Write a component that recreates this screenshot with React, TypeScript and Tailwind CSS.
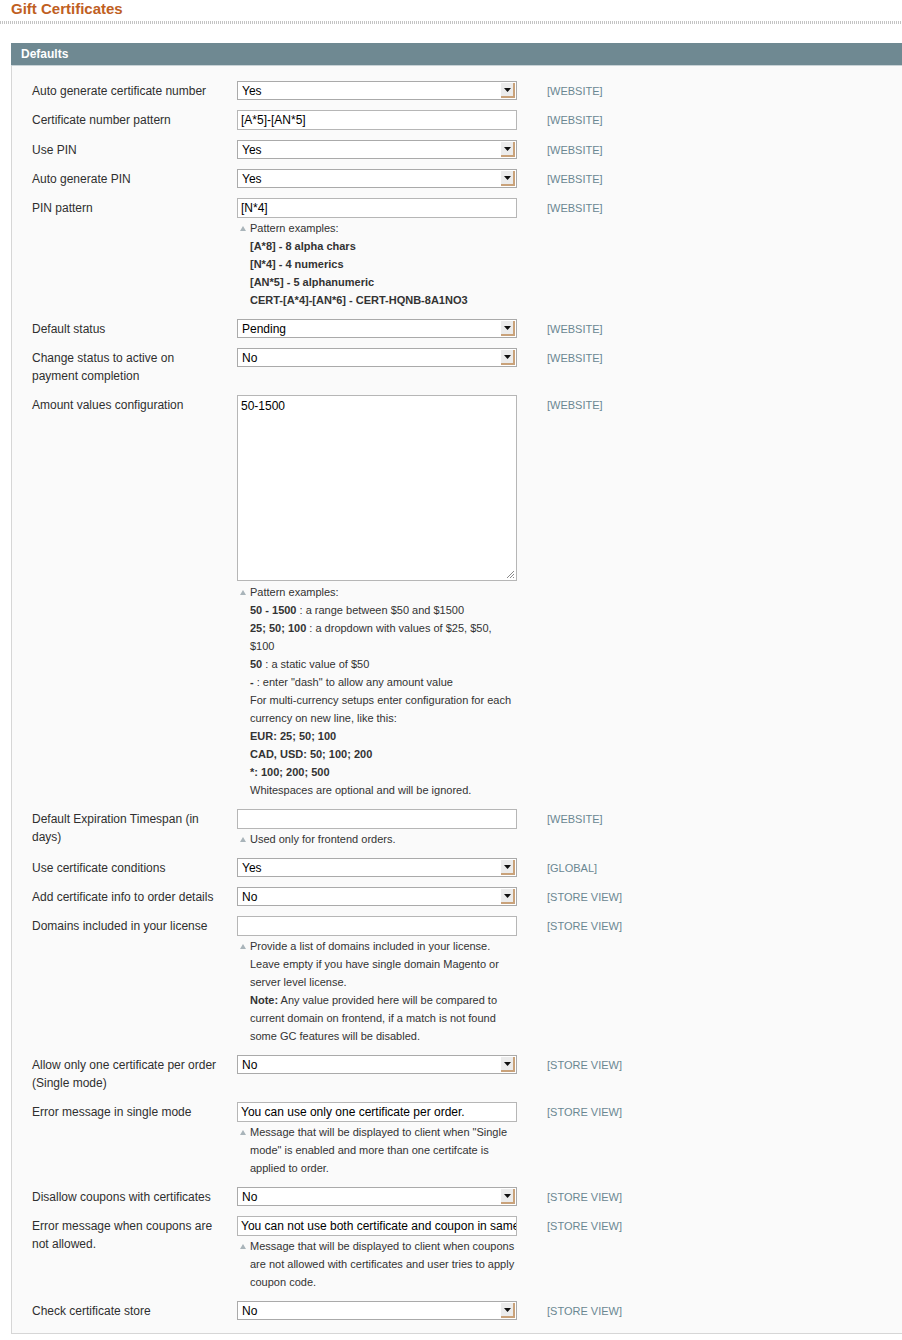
import React from "react";

type Kind = "select" | "text" | "textarea";

interface Row {
  label: string[];
  kind: Kind;
  value: string;
  scope: string;
  note?: React.ReactNode[];
}

const B = ({ children }: { children: React.ReactNode }) => (
  <span className="font-bold">{children}</span>
);

const rows: Row[] = [
  { label: ["Auto generate certificate number"], kind: "select", value: "Yes", scope: "[WEBSITE]" },
  { label: ["Certificate number pattern"], kind: "text", value: "[A*5]-[AN*5]", scope: "[WEBSITE]" },
  { label: ["Use PIN"], kind: "select", value: "Yes", scope: "[WEBSITE]" },
  { label: ["Auto generate PIN"], kind: "select", value: "Yes", scope: "[WEBSITE]" },
  {
    label: ["PIN pattern"],
    kind: "text",
    value: "[N*4]",
    scope: "[WEBSITE]",
    note: [
      "Pattern examples:",
      <B>[A*8] - 8 alpha chars</B>,
      <B>[N*4] - 4 numerics</B>,
      <B>[AN*5] - 5 alphanumeric</B>,
      <B>CERT-[A*4]-[AN*6] - CERT-HQNB-8A1NO3</B>,
    ],
  },
  { label: ["Default status"], kind: "select", value: "Pending", scope: "[WEBSITE]" },
  { label: ["Change status to active on", "payment completion"], kind: "select", value: "No", scope: "[WEBSITE]" },
  {
    label: ["Amount values configuration"],
    kind: "textarea",
    value: "50-1500",
    scope: "[WEBSITE]",
    note: [
      "Pattern examples:",
      <><B>50 - 1500</B> : a range between $50 and $1500</>,
      <><B>25; 50; 100</B> : a dropdown with values of $25, $50,</>,
      "$100",
      <><B>50</B> : a static value of $50</>,
      <><B>-</B> : enter "dash" to allow any amount value</>,
      "For multi-currency setups enter configuration for each",
      "currency on new line, like this:",
      <B>EUR: 25; 50; 100</B>,
      <B>CAD, USD: 50; 100; 200</B>,
      <B>*: 100; 200; 500</B>,
      "Whitespaces are optional and will be ignored.",
    ],
  },
  {
    label: ["Default Expiration Timespan (in", "days)"],
    kind: "text",
    value: "",
    scope: "[WEBSITE]",
    note: ["Used only for frontend orders."],
  },
  { label: ["Use certificate conditions"], kind: "select", value: "Yes", scope: "[GLOBAL]" },
  { label: ["Add certificate info to order details"], kind: "select", value: "No", scope: "[STORE VIEW]" },
  {
    label: ["Domains included in your license"],
    kind: "text",
    value: "",
    scope: "[STORE VIEW]",
    note: [
      "Provide a list of domains included in your license.",
      "Leave empty if you have single domain Magento or",
      "server level license.",
      <><B>Note:</B> Any value provided here will be compared to</>,
      "current domain on frontend, if a match is not found",
      "some GC features will be disabled.",
    ],
  },
  { label: ["Allow only one certificate per order", "(Single mode)"], kind: "select", value: "No", scope: "[STORE VIEW]" },
  {
    label: ["Error message in single mode"],
    kind: "text",
    value: "You can use only one certificate per order.",
    scope: "[STORE VIEW]",
    note: [
      'Message that will be displayed to client when "Single',
      'mode" is enabled and more than one certifcate is',
      "applied to order.",
    ],
  },
  { label: ["Disallow coupons with certificates"], kind: "select", value: "No", scope: "[STORE VIEW]" },
  {
    label: ["Error message when coupons are", "not allowed."],
    kind: "text",
    value: "You can not use both certificate and coupon in same order.",
    scope: "[STORE VIEW]",
    note: [
      "Message that will be displayed to client when coupons",
      "are not allowed with certificates and user tries to apply",
      "coupon code.",
    ],
  },
  { label: ["Check certificate store"], kind: "select", value: "No", scope: "[STORE VIEW]" },
];

function SelectBox({ value }: { value: string }) {
  return (
    <div className="relative flex h-[19px] w-[280px] items-center border border-[#aaaaaa] bg-white pl-[4px] text-[12px] text-black">
      <span>{value}</span>
      {/* dropdown button */}
      <span className="absolute right-[1px] top-[1px] flex h-[15px] w-[14px] items-center justify-center border-r-2 border-b-2 border-[#c9a27a] bg-[#ececec]">
        <svg width="7" height="4" viewBox="0 0 7 4">
          <path d="M0 0h7L3.5 4z" fill="#111" />
        </svg>
      </span>
    </div>
  );
}

function TextBox({ value }: { value: string }) {
  return (
    <div className="flex h-[20px] w-[280px] items-center overflow-hidden whitespace-nowrap border border-[#b6b6b6] bg-white pl-[3px] text-[12px] text-black">
      {value}
    </div>
  );
}

function TextArea({ value }: { value: string }) {
  return (
    <div className="relative h-[186px] w-[280px] border border-[#b6b6b6] bg-white pl-[3px] pt-[1px] text-[12px] leading-[18px] text-black">
      {value}
      {/* resize grip */}
      <svg className="absolute bottom-[1px] right-[1px]" width="10" height="10" viewBox="0 0 10 10">
        <path d="M9 2L2 9M9 5L5 9M9 8L8 9" stroke="#8a8a8a" strokeWidth="1" />
      </svg>
    </div>
  );
}

function Note({ lines, gap }: { lines: React.ReactNode[]; gap: string }) {
  return (
    <div className={`relative pl-[13px] text-[11px] leading-[18px] text-[#333] ${gap}`}>
      <svg className="absolute left-[3px] top-[7px]" width="6" height="5" viewBox="0 0 6 5">
        <path d="M3 0L6 5H0z" fill="#a9b4ba" />
      </svg>
      {lines.map((l, i) => (
        <div key={i} className="whitespace-nowrap">
          {l}
        </div>
      ))}
    </div>
  );
}

function FieldRow({ row }: { row: Row }) {
  return (
    <div className="flex py-[5px]">
      <div className="w-[205px] shrink-0 pt-[1px] text-[12px] leading-[18px] text-[#2f2f2f]">
        {row.label.map((l, i) => (
          <div key={i}>{l}</div>
        ))}
      </div>
      <div className="w-[280px] shrink-0">
        {row.kind === "select" && <SelectBox value={row.value} />}
        {row.kind === "text" && <TextBox value={row.value} />}
        {row.kind === "textarea" && <TextArea value={row.value} />}
        {row.note && (
          <Note lines={row.note} gap={row.kind === "textarea" ? "mt-[2px]" : "mt-[1px]"} />
        )}
      </div>
      <div className="ml-[30px] pt-[1px] text-[11px] leading-[18px] text-[#6a8792]">
        {row.scope}
      </div>
    </div>
  );
}

export default function App() {
  return (
    <div className="min-h-[1340px] w-[902px] overflow-hidden bg-white font-['Liberation_Sans',Arial,sans-serif]">
      <div className="pl-[11px]">
        <h3 className="text-[15px] font-bold leading-[17px] text-[#c0601f]">Gift Certificates</h3>
      </div>
      <div className="mt-[4px] h-[3px] w-full bg-[repeating-linear-gradient(90deg,#c4c4c4_0_1px,#ffffff_1px_2px)]" />
      <div className="ml-[11px] mt-[19px]">
        <div className="flex h-[22px] items-center bg-[#6f8992] pl-[10px] text-[12px] font-bold text-white">
          Defaults
        </div>
        <div className="border-t border-[#c8d2d6] bg-[#fafafa]">
          <div className="border-b border-l border-[#d6d6d6] pb-[8px] pl-[20px] pt-[10px]">
            {rows.map((r, i) => (
              <FieldRow key={i} row={r} />
            ))}
          </div>
        </div>
      </div>
    </div>
  );
}
